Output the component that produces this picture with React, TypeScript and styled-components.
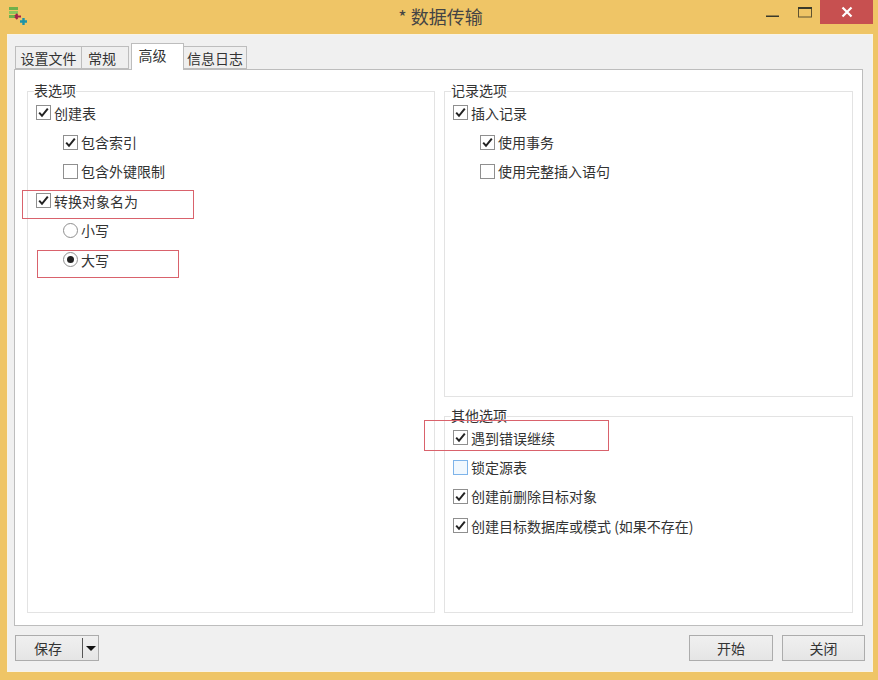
import React from 'react'
import styled, { createGlobalStyle } from 'styled-components'

const GlobalStyle = createGlobalStyle`
  html, body {
    margin: 0;
    padding: 0;
    background: #efc566;
  }
  * {
    box-sizing: border-box;
  }
`

const Window = styled.div`
  width: 878px;
  height: 680px;
  display: flex;
  flex-direction: column;
  background: #efc566;
  font-family: 'Noto Sans CJK SC', 'Liberation Sans', sans-serif;
  font-size: 14px;
  color: #333;
  overflow: hidden;
`

const TitleBar = styled.div`
  height: 34px;
  flex: none;
  display: flex;
  align-items: flex-start;
  position: relative;
`

const AppIcon = styled.svg`
  width: 20px;
  height: 20px;
  margin: 6px 0 0 8px;
  flex: none;
`

const Title = styled.div`
  position: absolute;
  left: 0;
  right: 0;
  top: 3px;
  padding-left: 3px;
  text-align: center;
  font-size: 18px;
  line-height: 26px;
  color: #444;
`

const WindowButtons = styled.div`
  margin-left: auto;
  margin-right: 5px;
  display: flex;
  align-items: flex-start;
`

const CaptionIcon = styled.svg`
  width: 16px;
  height: 16px;
  margin-top: 4px;
  margin-right: ${(p) => p.$gap}px;
  flex: none;
`

const CloseButton = styled.div`
  width: 53px;
  height: 24px;
  background: #c75050;
  display: flex;
  align-items: center;
  justify-content: center;
`

const Client = styled.div`
  flex: 1;
  margin: 0 5px 8px 7px;
  padding: 8px 9px 0 6px;
  background: #f0f0f0;
  border: 1px solid #f8f3e6;
  display: flex;
  flex-direction: column;
`

const TabStrip = styled.div`
  display: flex;
  align-items: flex-end;
  height: 26px;
  padding-left: 1px;
  position: relative;
  z-index: 1;
`

const Tab = styled.div`
  height: ${(p) => (p.$active ? 27 : 23)}px;
  width: ${(p) => p.$width}px;
  margin-left: ${(p) => p.$offset || 0}px;
  margin-bottom: ${(p) => (p.$active ? -1 : 0)}px;
  border: 1px solid #bdbdbd;
  border-left-width: ${(p) => (p.$active || p.$first ? 1 : 0)}px;
  border-bottom: ${(p) => (p.$active ? 'none' : '1px solid #bdbdbd')};
  background: ${(p) => (p.$active ? '#fff' : '#efefef')};
  display: flex;
  align-items: center;
  justify-content: center;
  font-size: 14px;
  line-height: 20px;
  color: #333;
  padding-bottom: ${(p) => (p.$active ? 4 : 0)}px;
  padding-right: ${(p) => p.$shift || 0}px;
`

const TabPanel = styled.div`
  height: 557px;
  flex: none;
  background: #fff;
  border: 1px solid #bdbdbd;
  padding: 13px 10px 12px 12px;
  display: grid;
  grid-template-columns: 408px 409px;
  column-gap: 9px;
`

const Column = styled.div`
  display: flex;
  flex-direction: column;
  gap: 11px;
  min-height: 0;
`

const Group = styled.fieldset`
  margin: 0;
  padding: 0 0 0 8px;
  border: 1px solid #e3e3e3;
  flex: ${(p) => (p.$height ? 'none' : 1)};
  height: ${(p) => (p.$height ? `${p.$height}px` : 'auto')};
  min-width: 0;
  display: block;
`

const Legend = styled.legend`
  padding: 0 0 2px;
  margin-left: -2px;
  margin-bottom: -1px;
  font-size: 14px;
  line-height: 14px;
  color: #333;
`

const OptionRow = styled.div`
  position: relative;
  height: 29.4px;
  display: flex;
  align-items: center;
  gap: 3px;
  padding-left: ${(p) => (p.$indent ? 27 : 0)}px;
  line-height: 20px;
  white-space: nowrap;
`

const CheckBox = styled.span`
  width: 15px;
  height: 15px;
  flex: none;
  border: 1px solid ${(p) => (p.$focus ? '#7eb4ea' : '#8f8f8f')};
  background: ${(p) => (p.$focus ? '#f1f8fe' : '#fff')};
  display: flex;
  align-items: center;
  justify-content: center;
`

const RadioDot = styled.span`
  width: 15px;
  height: 15px;
  flex: none;
  border-radius: 50%;
  border: 1px solid #8f8f8f;
  background: #fff;
  display: flex;
  align-items: center;
  justify-content: center;

  &::after {
    content: '';
    width: 7px;
    height: 7px;
    border-radius: 50%;
    background: ${(p) => (p.$checked ? '#222' : 'transparent')};
  }
`

const Highlight = styled.div`
  position: absolute;
  left: ${(p) => p.$left}px;
  top: ${(p) => p.$top}px;
  width: ${(p) => p.$width}px;
  height: ${(p) => p.$height}px;
  border: 1px solid #d9626c;
  pointer-events: none;
`

const Footer = styled.div`
  flex: 1;
  display: flex;
  align-items: flex-start;
  justify-content: space-between;
  padding: 9px 0 0 1px;
  margin-right: -2px;
`

const ButtonRow = styled.div`
  display: flex;
  gap: 9px;
`

const Button = styled.div`
  width: ${(p) => p.$width}px;
  height: 26px;
  border: 1px solid #acacac;
  background: linear-gradient(#f0f0f0, #e5e5e5);
  display: flex;
  align-items: center;
  justify-content: center;
  font-size: 14px;
  color: #333;
`

const SplitButton = styled.div`
  width: 84px;
  height: 26px;
  border: 1px solid #acacac;
  background: linear-gradient(#f0f0f0, #e5e5e5);
  display: flex;
  align-items: center;
`

const SplitLabel = styled.div`
  flex: 1;
  text-align: center;
  padding-left: 2px;
  padding-right: 4px;
  font-size: 14px;
  color: #333;
`

const SplitDivider = styled.div`
  width: 1px;
  height: 20px;
  background: #555;
`

const SplitArrow = styled.div`
  width: 15px;
  display: flex;
  justify-content: center;

  &::after {
    content: '';
    border-left: 5px solid transparent;
    border-right: 5px solid transparent;
    border-top: 5px solid #111;
  }
`

const Check = () => (
  <svg width="13" height="13" viewBox="0 0 13 13">
    <path d="M2.2 6.6 L5 9.8 L10.8 2.6" fill="none" stroke="#222" strokeWidth="2" />
  </svg>
)

type OptionProps = {
  label: string
  checked?: boolean
  indent?: boolean
  focus?: boolean
  children?: React.ReactNode
}

const Option = ({ label, checked, indent, focus, children }: OptionProps) => (
  <OptionRow $indent={indent}>
    <CheckBox $focus={focus}>{checked && <Check />}</CheckBox>
    <span>{label}</span>
    {children}
  </OptionRow>
)

const Radio = ({ label, checked, children }: OptionProps) => (
  <OptionRow $indent>
    <RadioDot $checked={checked} />
    <span>{label}</span>
    {children}
  </OptionRow>
)

const App = () => {
  return (
    <Window>
      <GlobalStyle />
      <TitleBar>
        <AppIcon viewBox="0 0 20 20">
          <rect x="1" y="1" width="9" height="3" fill="#6fb04a" />
          <rect x="1" y="5" width="9" height="3" fill="#8cc65c" />
          <rect x="1" y="9" width="9" height="3" fill="#6fb04a" />
          <path d="M7 10.5 H13 M7 10.5 l2.5 -2.5 M7 10.5 l2.5 2.5" stroke="#a3224a" strokeWidth="2" fill="none" />
          <path d="M12 15.5 H19 M15.5 12 V19" stroke="#1d93a8" strokeWidth="2.4" fill="none" />
        </AppIcon>
        <Title>* 数据传输</Title>
        <WindowButtons>
          <CaptionIcon $gap={17} viewBox="0 0 16 16">
            <rect x="2" y="11.5" width="13" height="1.5" fill="#3a3a2a" />
          </CaptionIcon>
          <CaptionIcon $gap={7} viewBox="0 0 16 16">
            <rect x="1.5" y="3.5" width="13" height="9.5" fill="none" stroke="#5f5330" />
            <rect x="1" y="3" width="14" height="2" fill="#3a3a2a" />
          </CaptionIcon>
          <CloseButton>
            <svg width="12" height="12" viewBox="0 0 12 12">
              <path d="M1.5 1.5 L10.5 10.5 M10.5 1.5 L1.5 10.5" stroke="#fff" strokeWidth="2.2" />
            </svg>
          </CloseButton>
        </WindowButtons>
      </TitleBar>
      <Client>
        <TabStrip>
          <Tab $width={67} $first>设置文件</Tab>
          <Tab $width={47} $shift={6}>常规</Tab>
          <Tab $width={53} $active $offset={2} $shift={10}>高级</Tab>
          <Tab $width={63}>信息日志</Tab>
        </TabStrip>
        <TabPanel>
          <Column>
            <Group>
              <Legend>表选项</Legend>
              <Option label="创建表" checked />
              <Option label="包含索引" checked indent />
              <Option label="包含外键限制" indent />
              <Option label="转换对象名为" checked>
                <Highlight $left={-14} $top={4} $width={172} $height={29} />
              </Option>
              <Radio label="小写" indent />
              <Radio label="大写" checked indent>
                <Highlight $left={1} $top={5} $width={142} $height={28} />
              </Radio>
            </Group>
          </Column>
          <Column>
            <Group $height={314}>
              <Legend>记录选项</Legend>
              <Option label="插入记录" checked />
              <Option label="使用事务" checked indent />
              <Option label="使用完整插入语句" indent />
            </Group>
            <Group>
              <Legend>其他选项</Legend>
              <Option label="遇到错误继续" checked>
                <Highlight $left={-29} $top={-3} $width={185} $height={31} />
              </Option>
              <Option label="锁定源表" focus />
              <Option label="创建前删除目标对象" checked />
              <Option label="创建目标数据库或模式 (如果不存在)" checked />
            </Group>
          </Column>
        </TabPanel>
        <Footer>
          <SplitButton>
            <SplitLabel>保存</SplitLabel>
            <SplitDivider />
            <SplitArrow />
          </SplitButton>
          <ButtonRow>
            <Button $width={84}>开始</Button>
            <Button $width={83}>关闭</Button>
          </ButtonRow>
        </Footer>
      </Client>
    </Window>
  )
}

export default App
